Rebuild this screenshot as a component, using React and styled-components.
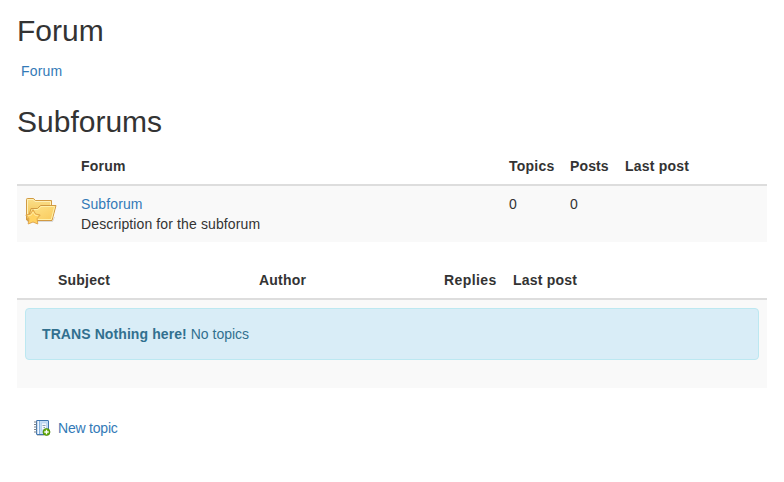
import React from "react";
import styled, { createGlobalStyle } from "styled-components";

const GlobalStyle = createGlobalStyle`
  *, *::before, *::after { box-sizing: border-box; }
  body {
    margin: 0;
    background: #fff;
    color: #333;
    font-family: "Liberation Sans", Arial, sans-serif;
    font-size: 14px;
    line-height: 20px;
  }
`;

const Page = styled.main`
  display: flow-root;
  padding: 14px 17px 0;
`;

const Heading = styled.h2`
  margin: 0;
  font-size: 30px;
  font-weight: 400;
  line-height: 33px;
`;

const Breadcrumb = styled.nav`
  margin: 14px 0 24px;
  padding-left: 4px;
`;

const Link = styled.a`
  color: #337ab7;
  text-decoration: none;
  letter-spacing: ${(p) => p.$spacing ?? 0.12}px;
`;

const Table = styled.table`
  width: 100%;
  table-layout: fixed;
  border-spacing: 0;
  margin: ${(p) => p.$top}px 0 20px;
`;

const Col = styled.col`
  width: ${(p) => p.$width}px;
`;

const HeadCell = styled.th`
  height: 38px;
  padding: 8px 0 8px 8px;
  border-bottom: 2px solid #ddd;
  text-align: left;
  white-space: nowrap;
  letter-spacing: ${(p) => p.$spacing ?? 0.22}px;
`;

const Cell = styled.td`
  padding: 8px;
  background: #f9f9f9;
  vertical-align: top;
`;

const Description = styled.div`
  letter-spacing: 0.12px;
`;

const Alert = styled.div`
  margin-bottom: 20px;
  padding: 15px 16px;
  border: 1px solid #bce8f1;
  border-radius: 4px;
  background: #d9edf7;
  color: #31708f;
`;

const AlertTitle = styled.strong`
  letter-spacing: 0.09px;
`;

const Actions = styled.div`
  display: flex;
  align-items: center;
  gap: 7px;
  margin-top: 30px;
  padding-left: 17px;
`;

const Icon = styled.svg`
  display: block;
  flex: none;
`;

const FolderIcon = () => (
  <Icon width="32" height="32" viewBox="0 0 32 32">
    <defs>
      <linearGradient id="back" x1="0" y1="0" x2="0" y2="1">
        <stop offset="0" stopColor="#fae08c" />
        <stop offset="1" stopColor="#f3bf4b" />
      </linearGradient>
      <linearGradient id="front" x1="0" y1="0" x2="1" y2="1">
        <stop offset="0" stopColor="#ffe58c" />
        <stop offset="1" stopColor="#f8c95b" />
      </linearGradient>
    </defs>
    <path d="M2 27.5H27.5L29.5 23" fill="none" stroke="#b9b9b9" opacity=".5" />
    <path d="M1.5 26V5.4Q1.5 4.5 2.4 4.5H8.6L10.4 6.5H26.5V26Z" fill="url(#back)" stroke="#d19a43" />
    <path d="M2.5 24V5.5H8.2L10 7.5H25.5V11" fill="none" stroke="#fff1b8" />
    <path d="M2.5 26.5L6 14.5H12.5L15.5 11.5H31L27 26.5Z" fill="url(#front)" stroke="#d19a43" strokeLinejoin="round" />
    <path d="M6.8 18L7.7 15.5H13L16 12.5H29.6L26.3 25.5H12" fill="none" stroke="#fff0a9" />
    <path d="M8 15.6L10.6 20L15.2 21L12.1 24.7L12.8 30L8 28L3.2 30L3.9 24.7L.8 21L5.4 20Z" fill="#ffd261" stroke="#dba04a" strokeWidth=".9" strokeLinejoin="round" />
    <path d="M3 21.8L6.2 21.2L8 18L9.8 21.2L13 21.8" fill="none" stroke="#ffeeab" strokeWidth=".8" />
  </Icon>
);

const NotebookIcon = () => (
  <Icon width="17" height="17" viewBox="0 0 17 17">
    <rect x="2.5" y=".5" width="12" height="14" rx=".4" fill="#c5dcf5" stroke="#3f76b0" />
    <path d="M4.5 1V14" stroke="#f4f9ff" />
    <path d="M5.5 1V14" stroke="#76a6d5" strokeWidth=".8" />
    <rect x="7.5" y="3" width="5" height="7" fill="#f3f8ff" stroke="#a7c7ea" strokeWidth=".6" />
    <path d="M8.5 5.5H11.5M9.5 7.5H11" stroke="#72869f" strokeWidth=".8" />
    <path d="M0 2H3M0 4.5H3M0 7H3M0 9.5H3M0 12H3" stroke="#7a828a" />
    <path d="M3 15.5H10" stroke="#aaa" opacity=".6" />
    <circle cx="12.5" cy="12" r="3.5" fill="#66ac0a" stroke="#458500" strokeWidth=".7" />
    <path d="M12.5 9.8V14.2M10.3 12H14.7" stroke="#fff" strokeWidth="1.3" />
  </Icon>
);

export default function App() {
  return (
    <>
      <GlobalStyle />
      <Page>
        <Heading>Forum</Heading>
        <Breadcrumb>
          <Link $spacing={0.2}>Forum</Link>
        </Breadcrumb>
        <Heading>Subforums</Heading>
        <Table $top={10}>
          <colgroup>
            <Col $width={56} />
            <Col $width={428} />
            <Col $width={61} />
            <Col $width={55} />
            <Col $width={150} />
          </colgroup>
          <thead>
            <tr>
              <HeadCell />
              <HeadCell $spacing={0.2}>Forum</HeadCell>
              <HeadCell>Topics</HeadCell>
              <HeadCell $spacing={0.12}>Posts</HeadCell>
              <HeadCell>Last post</HeadCell>
            </tr>
          </thead>
          <tbody>
            <tr>
              <Cell><FolderIcon /></Cell>
              <Cell>
                <Link>Subforum</Link>
                <Description>Description for the subforum</Description>
              </Cell>
              <Cell>0</Cell>
              <Cell>0</Cell>
              <Cell />
            </tr>
          </tbody>
        </Table>
        <Table $top={0}>
          <colgroup>
            <Col $width={33} />
            <Col $width={201} />
            <Col $width={185} />
            <Col $width={69} />
            <Col $width={262} />
          </colgroup>
          <thead>
            <tr>
              <HeadCell />
              <HeadCell>Subject</HeadCell>
              <HeadCell>Author</HeadCell>
              <HeadCell $spacing={0.4}>Replies</HeadCell>
              <HeadCell>Last post</HeadCell>
            </tr>
          </thead>
          <tbody>
            <tr>
              <Cell colSpan={5}>
                <Alert>
                  <AlertTitle>TRANS Nothing here!</AlertTitle> No topics
                </Alert>
              </Cell>
            </tr>
          </tbody>
        </Table>
        <Actions>
          <NotebookIcon />
          <Link $spacing={-0.2}>New topic</Link>
        </Actions>
      </Page>
    </>
  );
}
